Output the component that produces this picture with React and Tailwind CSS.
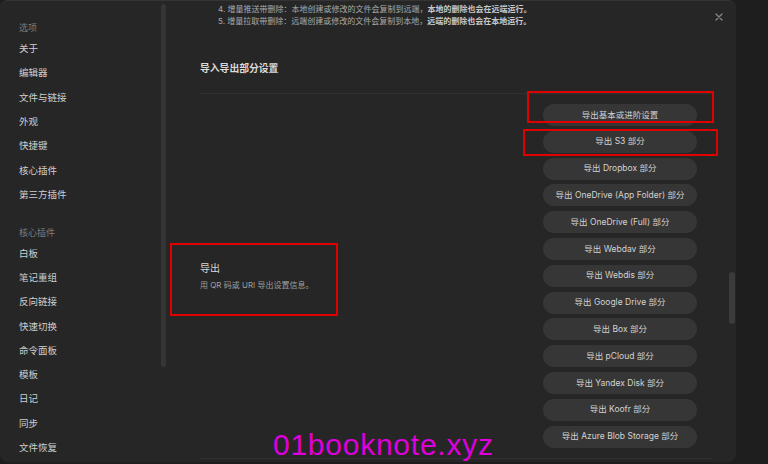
const sidebarCore = ['关于', '编辑器', '文件与链接', '外观', '快捷键', '核心插件', '第三方插件'];
const sidebarPlugins = ['白板', '笔记重组', '反向链接', '快速切换', '命令面板', '模板', '日记', '同步', '文件恢复'];

const exportButtons = [
  '导出基本或进阶设置',
  '导出 S3 部分',
  '导出 Dropbox 部分',
  '导出 OneDrive (App Folder) 部分',
  '导出 OneDrive (Full) 部分',
  '导出 Webdav 部分',
  '导出 Webdis 部分',
  '导出 Google Drive 部分',
  '导出 Box 部分',
  '导出 pCloud 部分',
  '导出 Yandex Disk 部分',
  '导出 Koofr 部分',
  '导出 Azure Blob Storage 部分',
];

const Sidebar = () => {
  return (
    <div className="flex w-[166px] shrink-0">
      <div className="w-[161px] pl-[19px] pt-[18px] flex flex-col">
        <div className="h-[18px] flex items-center text-[9px] text-[#7c7c7c]">选项</div>
        {sidebarCore.map((item) => (
          <div key={item} className="h-[24.33px] flex items-center text-[9.5px] text-[#cfcfcf]">{item}</div>
        ))}
        <div className="h-[18px] mt-[16.7px] flex items-center text-[9px] text-[#7c7c7c]">核心插件</div>
        {sidebarPlugins.map((item) => (
          <div key={item} className="h-[24.25px] flex items-center text-[9.5px] text-[#cfcfcf]">{item}</div>
        ))}
      </div>
      <div className="w-[5px] pt-[3px]">
        <div className="h-[363px] rounded-full bg-[#353535]" />
      </div>
    </div>
  );
};

const Main = () => {
  return (
    <div className="flex flex-1">
      <div className="flex-1 pl-[34px] pr-[17px] flex flex-col">
        <div className="-mt-[10px] pl-[18px] text-[8px] leading-[12px] text-[#a9a9a9] flex flex-col whitespace-nowrap">
          <div>3. 增量拉取：远端创建或修改的文件会复制到本地。</div>
          <div>4. 增量推送带删除：本地创建或修改的文件会复制到远端，<span className="font-bold text-[#c9c9c9]">本地的删除也会在远端运行。</span></div>
          <div>5. 增量拉取带删除：远端创建或修改的文件会复制到本地，<span className="font-bold text-[#c9c9c9]">远端的删除也会在本地运行。</span></div>
        </div>
        <div className="mt-[32px] h-[20px] flex items-center text-[9.8px] font-bold text-[#dadada]">导入导出部分设置</div>
        <div className="mt-[14px] border-t border-[#323232]" />
        <div className="flex items-center justify-between pt-[10px] pb-[10px] border-b border-[#323232]">
          <div className="flex flex-col gap-[3px]">
            <div className="text-[10px] text-[#d6d6d6]">导出</div>
            <div className="text-[8px] text-[#9e9e9e]">用 QR 码或 URI 导出设置信息。</div>
          </div>
          <div className="w-[154px] mr-[15px] flex flex-col gap-[4.8px]">
            {exportButtons.map((label) => (
              <div key={label} className="h-[22px] rounded-[11px] bg-[#363636] flex items-center justify-center text-[8.5px] text-[#d2d2d2] whitespace-nowrap">
                {label}
              </div>
            ))}
          </div>
        </div>
      </div>
      <div className="w-[6px] mr-[1px] pt-[271px]">
        <div className="h-[52px] rounded-full bg-[#3b3b3b]" />
      </div>
    </div>
  );
};

const App = () => {
  return (
    <div
      className="w-[768px] h-[464px] bg-[#1e1e1e] relative overflow-hidden"
      style={{ fontFamily: 'Inter, "Noto Sans CJK SC", sans-serif' }}
    >
      <div className="w-[736px] h-[462px] bg-[#262626] rounded-[8px] border-t border-[#343434] flex overflow-hidden relative">
        <Sidebar />
        <Main />
        <div className="absolute right-[12px] top-[10px] w-[10px] h-[12px] flex items-center justify-center">
          <svg width="8" height="8" viewBox="0 0 8 8" stroke="#8a8a8a" strokeWidth="1.2" strokeLinecap="round">
            <path d="M1 1L7 7M7 1L1 7" />
          </svg>
        </div>
      </div>

      <div className="absolute left-[527px] top-[91px] w-[187px] h-[32px] border-2 border-[#e00000]" />
      <div className="absolute left-[523px] top-[129px] w-[195px] h-[27px] border-2 border-[#e00000]" />
      <div className="absolute left-[170px] top-[243px] w-[168px] h-[73px] border-2 border-[#e00000]" />

      <div
        className="absolute left-[273px] top-[430px] text-[30px] leading-none tracking-[0.75px] text-[#dd00dd]"
        style={{ fontFamily: '"Liberation Sans", Arial, sans-serif' }}
      >
        01booknote.xyz
      </div>
    </div>
  );
};

export default App;
